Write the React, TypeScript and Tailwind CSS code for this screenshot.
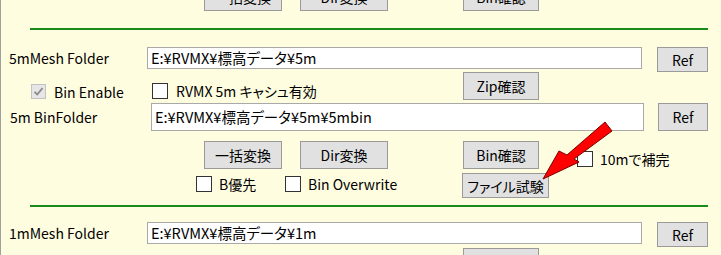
import React from "react";

const font = {
  fontFamily: '"Noto Sans CJK JP", "Noto Sans", sans-serif',
  fontFeatureSettings: '"palt"',
};

const Btn = ({ label, className = "" }: { label: string; className?: string }) => (
  <div
    className={
      "flex shrink-0 items-center justify-center whitespace-nowrap border border-[#9a9a9a] bg-[#e1e1e1] text-[14px] text-black " +
      className
    }
  >
    {label}
  </div>
);

const Check = ({ className = "" }: { className?: string }) => (
  <div className={"h-[16px] w-[16px] shrink-0 border border-[#333] bg-white " + className} />
);

const PathBox = ({ value, className = "" }: { value: string; className?: string }) => (
  <div
    className={
      "flex shrink-0 items-center whitespace-nowrap border border-[#a9a9a9] bg-white pl-[3px] text-[14.5px] text-black " +
      className
    }
  >
    {value}
  </div>
);

const Divider = ({ className = "" }: { className?: string }) => (
  <div className={"ml-[29px] h-[2px] w-[678px] bg-[#1a8a1a] " + className} />
);

const Arrow = () => (
  <svg
    className="pointer-events-none absolute left-0 top-0"
    width="721"
    height="255"
    viewBox="0 0 721 255"
  >
    <polygon
      points="604,122 611,131 573,159 578,162 542,179 558,151 566,155"
      fill="#ff0000"
      stroke="#7a0000"
      strokeWidth="1"
      strokeLinejoin="round"
    />
  </svg>
);

export default function App() {
  return (
    <div
      className="relative h-[255px] w-[721px] overflow-hidden whitespace-nowrap border-l border-[#a0a0a0] bg-[#fffde0] text-[14px] leading-none"
      style={font}
    >
      {/* bottom of the previous block */}
      <div className="flex h-[11px] items-end overflow-hidden">
        <Btn label="一括変換" className="ml-[203px] h-[28px] w-[78px]" />
        <Btn label="Dir変換" className="ml-[18px] h-[28px] w-[88px]" />
        <Btn label="Bin確認" className="ml-[75px] h-[28px] w-[76px]" />
      </div>

      <Divider className="mt-[17px]" />

      {/* 5m mesh */}
      <div className="mt-[17px] flex h-[25px] items-start">
        <div className="ml-[8px] flex h-[22px] w-[138px] items-center">5mMesh Folder</div>
        <PathBox value="E:¥RVMX¥標高データ¥5m" className="h-[22px] w-[495px]" />
        <Btn label="Ref" className="ml-[15px] h-[25px] w-[51px]" />
      </div>

      <div className="flex h-[28px] items-start">
        <div className="ml-[30px] mt-[12px] flex w-[121px] items-center">
          <div className="flex h-[15px] w-[15px] items-center justify-center border border-[#c2c2c2] bg-[#e6e6e6]">
            <svg width="11" height="11" viewBox="0 0 11 11">
              <path d="M1.5 5.8 L4.2 8.5 L9.5 2.2" fill="none" stroke="#8c8c8c" strokeWidth="1.8" />
            </svg>
          </div>
          <span className="ml-[8px]">Bin Enable</span>
        </div>
        <div className="mt-[11px] flex w-[311px] items-center">
          <Check />
          <span className="ml-[8px]">RVMX 5m キャシュ有効</span>
        </div>
        <Btn label="Zip確認" className="h-[28px] w-[76px]" />
      </div>

      <div className="mt-[3px] flex h-[28px] items-start">
        <div className="ml-[9px] flex h-[28px] w-[141px] items-center">5m BinFolder</div>
        <PathBox value="E:¥RVMX¥標高データ¥5m¥5mbin" className="h-[28px] w-[493px]" />
        <Btn label="Ref" className="ml-[14px] h-[28px] w-[50px]" />
      </div>

      <div className="mt-[10px] flex h-[28px] items-start">
        <Btn label="一括変換" className="ml-[203px] h-[28px] w-[78px]" />
        <Btn label="Dir変換" className="ml-[18px] h-[28px] w-[88px]" />
        <Btn label="Bin確認" className="ml-[75px] h-[28px] w-[76px]" />
        <div className="ml-[38px] mt-[10px] flex items-center">
          <Check />
          <span className="ml-[7px]">10mで補完</span>
        </div>
      </div>

      <div className="flex h-[29px] items-start">
        <div className="ml-[195px] mt-[7px] flex w-[89px] items-center">
          <Check />
          <span className="ml-[7px]">B優先</span>
        </div>
        <div className="mt-[7px] flex w-[177px] items-center">
          <Check />
          <span className="ml-[7px]">Bin Overwrite</span>
        </div>
        <Btn label="ファイル試験" className="mt-[4px] h-[25px] w-[87px]" />
      </div>

      <Divider className="mt-[7px]" />

      {/* 1m mesh */}
      <div className="mt-[15px] flex h-[26px] items-start">
        <div className="ml-[8px] flex h-[22px] w-[138px] items-center">1mMesh Folder</div>
        <PathBox value="E:¥RVMX¥標高データ¥1m" className="h-[22px] w-[495px]" />
        <Btn label="Ref" className="ml-[15px] h-[25px] w-[51px]" />
      </div>

      <div className="flex h-[28px] items-start">
        <Btn label="Zip確認" className="ml-[462px] h-[28px] w-[76px]" />
      </div>

      <Arrow />
    </div>
  );
}
